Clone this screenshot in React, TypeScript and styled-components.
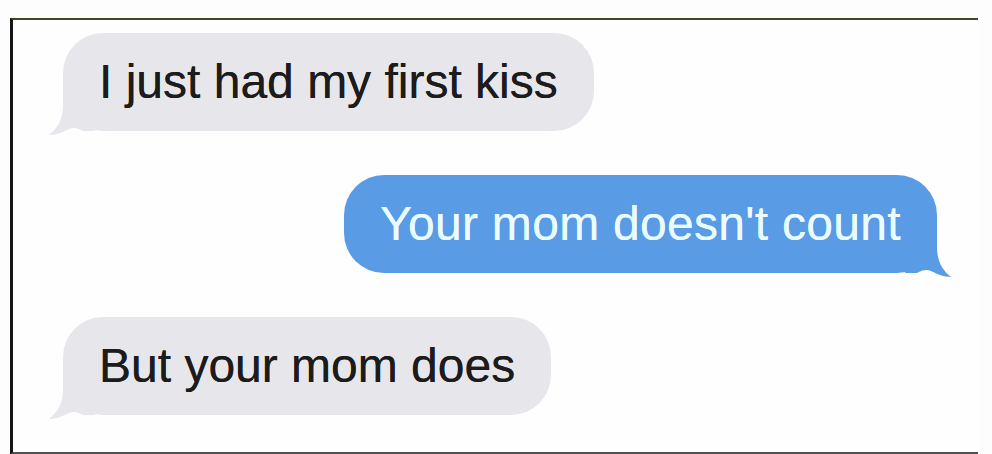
import styled, { createGlobalStyle } from 'styled-components';

const GlobalStyle = createGlobalStyle`
  html, body {
    margin: 0;
    padding: 0;
    background: #fdfdfd;
  }
  body {
    font-family: 'Liberation Sans', Arial, Helvetica, sans-serif;
  }
`;

type Side = 'in' | 'out';

const messages: { side: Side; text: string }[] = [
  { side: 'in', text: 'I just had my first kiss' },
  { side: 'out', text: "Your mom doesn't count" },
  { side: 'in', text: 'But your mom does' },
];

const Page = styled.div`
  width: 992px;
  height: 454px;
  padding: 18px 0 0 10px;
  box-sizing: border-box;
  background: #fdfdfd;
  overflow: hidden;
`;

const Frame = styled.div`
  width: 968px;
  height: 437px;
  box-sizing: border-box;
  border-top: 2px solid #41452a;
  border-left: 3px solid #141414;
  border-bottom: 3px solid #505050;
  padding: 13px 41px 0 50px;
  display: flex;
  flex-direction: column;
  gap: 44px;
  background: #fefefe;
`;

const Bubble = styled.div<{ $side: Side }>`
  position: relative;
  align-self: ${(p) => (p.$side === 'in' ? 'flex-start' : 'flex-end')};
  height: 98px;
  line-height: 98px;
  padding: 0 36px;
  border-radius: 40px;
  font-size: 48px;
  white-space: nowrap;
  letter-spacing: ${(p) => (p.$side === 'in' ? '0' : '0.3px')};
  background: ${(p) => (p.$side === 'in' ? '#e6e6eb' : '#5a9be6')};
  color: ${(p) => (p.$side === 'in' ? '#1c1c1c' : '#eafcff')};
  text-shadow: 0 0 0.6px currentColor;
`;

const Tail = styled.svg<{ $side: Side }>`
  position: absolute;
  bottom: -4px;
  width: 50px;
  height: 44px;
  ${(p) => (p.$side === 'in' ? 'left: -14px;' : 'right: -14px; transform: scaleX(-1);')}
`;

const ChatTail = ({ side, color }: { side: Side; color: string }) => (
  <Tail $side={side} viewBox="0 0 50 44">
    <path
      d="M14 0 L30 0 L46 40 L34 40 C29 37 24 36 20 38 C14 41 7 44 0 44 C9 37 14 28 14 14 Z"
      fill={color}
    />
  </Tail>
);

export default function App() {
  return (
    <>
      <GlobalStyle />
      <Page>
        <Frame>
          {messages.map((m, i) => (
            <Bubble key={i} $side={m.side}>
              <ChatTail side={m.side} color={m.side === 'in' ? '#e6e6eb' : '#5a9be6'} />
              {m.text}
            </Bubble>
          ))}
        </Frame>
      </Page>
    </>
  );
}
